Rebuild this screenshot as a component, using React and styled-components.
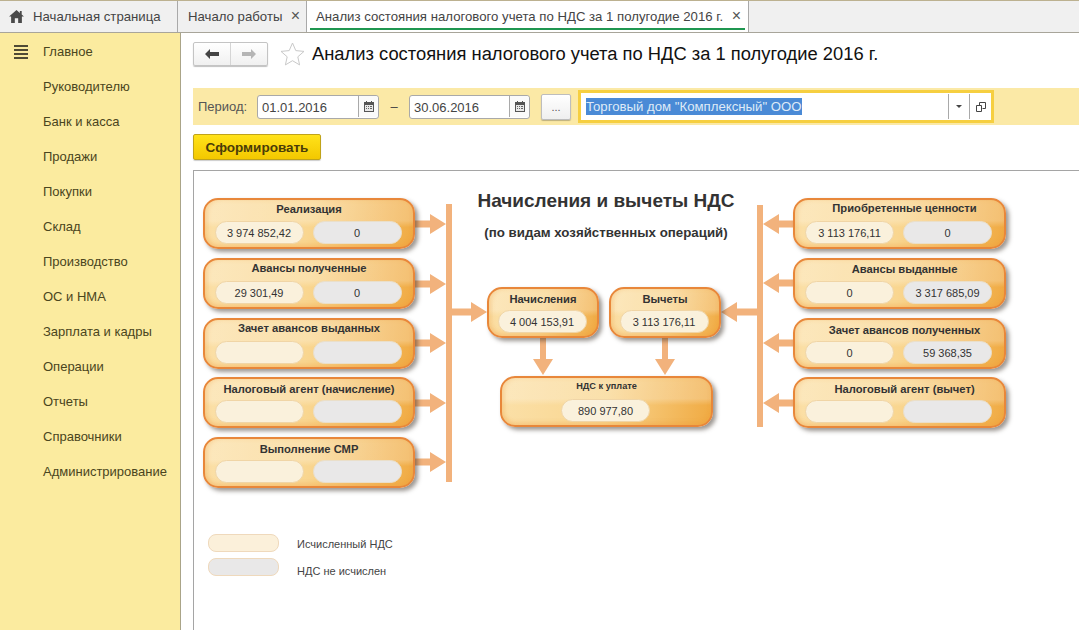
import React from "react";
import styled, { createGlobalStyle } from "styled-components";

const Global = createGlobalStyle`
  html, body { margin: 0; padding: 0; height: 100%; background: #fff; overflow: hidden; }
  #root { height: 100%; }
  * { box-sizing: border-box; }
`;
const Page = styled.div`
  width: 1079px; height: 630px; display: flex; flex-direction: column; overflow: hidden;
  font-family: "Liberation Sans", Arial, sans-serif; color: #333;
`;
const TabBar = styled.div`
  height: 33px; flex: none; display: flex; background: #f0f0f0;
  border-top: 1px solid #bcb190; border-bottom: 1px solid #a8a59a;
`;
const Tab = styled.div`
  position: relative; display: flex; align-items: center; flex: none;
  width: ${p => p.$w}px; padding-left: ${p => p.$pad}px; gap: ${p => p.$gap || 0}px;
  border-right: 1px solid #a9a9a9; font-size: 13.2px; color: #444; white-space: nowrap;
  background: ${p => (p.$active ? "#fff" : "#f0f0f0")};
  ${p => p.$active && "&::after { content: ''; position: absolute; left: 3px; right: 3px; bottom: 2px; height: 2px; background: #1f9650; }"}
`;
const Close = styled.span`
  position: absolute; right: ${p => p.$r}px; top: 8px; font-size: 16px; line-height: 14px; color: #555;
`;
const Body = styled.div`flex: 1; display: flex; min-height: 0;`;
const Sidebar = styled.nav`
  width: 181px; flex: none; background: #fbeb9f; border-right: 1px solid #aaa488;
  padding-top: 1px; display: flex; flex-direction: column;
`;
const NavItem = styled.div`
  position: relative; height: 35px; padding-left: 43px; display: flex; align-items: center;
  font-size: 13px; color: #4a4520; white-space: nowrap;
`;
const BurgerIcon = styled.svg`position: absolute; left: 14px; top: 11px;`;
const Main = styled.main`
  flex: 1; min-width: 0; display: flex; flex-direction: column; padding: 9px 0 0 12px;
`;
const Header = styled.div`height: 24px; display: flex; align-items: center; margin-bottom: 22px;`;
const NavGroup = styled.div`
  width: 75px; height: 24px; display: flex; border: 1px solid #c4c4c4; border-radius: 2px;
  background: linear-gradient(#fff, #f0f0f0); box-shadow: 0 1px 1px rgba(0,0,0,.25);
`;
const NavBtn = styled.div`
  flex: 1; display: flex; align-items: center; justify-content: center;
  & + & { border-left: 1px solid #d5d5d5; }
`;
const Title = styled.h1`
  margin: 0 0 0 7px; font-size: 18.35px; font-weight: 400; color: #111; white-space: nowrap;
`;
const StarIcon = styled.svg`margin-left: 12px; flex: none;`;
const FilterBar = styled.div`
  height: 37px; display: flex; align-items: center; background: #fbe9a6; padding-left: 5px; margin-bottom: 9px;
`;
const Label = styled.span`font-size: 13px; color: #555; width: 59px; flex: none;`;
const DateBox = styled.div`
  width: ${p => p.$w}px; height: 24px; flex: none; display: flex; align-items: center;
  background: #fff; border: 1px solid #a9a9a9; border-radius: 3px;
  font-size: 13px; color: #444; padding: 1px 0 0 4px;
`;
const DateText = styled.span`flex: 1;`;
const CalBtn = styled.span`
  width: 20px; height: 100%; margin-top: -1px; display: flex; align-items: center; justify-content: center;
  border-left: 1px solid #a9a9a9; background: #fafafa; border-radius: 0 3px 3px 0;
`;
const Dash = styled.span`width: 30px; flex: none; text-align: center; font-size: 13px; color: #444;`;
const DotsBtn = styled.div`
  width: 30px; height: 26px; margin-left: 11px; flex: none; display: flex; align-items: center; justify-content: center;
  border: 1px solid #bdbdbd; border-radius: 2px; background: linear-gradient(#fff, #efefef);
  box-shadow: 0 1px 1px rgba(0,0,0,.25); font-size: 11px; color: #555;
`;
const Combo = styled.div`
  width: 416px; height: 33px; margin-left: 7px; flex: none; display: flex; align-items: center;
  background: #fff; border: 3px solid #f6cf40; padding-left: 5px;
  font-size: 13.2px;
`;
const ComboValue = styled.span`flex: 1; min-width: 0;`;
const Selected = styled.span`background: #4a8ad6; color: #dfeaf7; padding: 1px 0;`;
const ComboBtn = styled.span`
  width: ${p => p.$w}px; height: 25px; flex: none; display: flex; align-items: center; justify-content: center;
  border-left: 1px solid #a9a9a9;
`;
const Submit = styled.div`
  width: 128px; height: 26px; flex: none; display: flex; align-items: center; justify-content: center;
  background: linear-gradient(#ffe21a, #f3c800); border: 1px solid #c0a31a; border-radius: 2px;
  box-shadow: 0 1px 1px rgba(0,0,0,.2); font-size: 13.5px; font-weight: 700; color: #4a3c08; margin-bottom: 10px;
`;
const Frame = styled.section`
  position: relative; flex: 1; border: 1px solid #a5a5a5; border-width: 1px 0 0 1px; overflow: hidden; background: #fff;
`;
/* Diagram canvas: card coordinates are page coordinates, the frame starts at (194,171) */
const Canvas = styled.div`position: absolute; left: -194px; top: -171px; width: 1079px; height: 630px;`;
const Wires = styled.svg`position: absolute; left: 0; top: 0;`;
const Card = styled.div`
  position: absolute; left: ${p => p.$x}px; top: ${p => p.$y}px; width: ${p => p.$w}px; height: 51px;
  border: 2px solid #e8873a; border-radius: 15px;
  background:
    linear-gradient(rgba(255,255,255,.24) 0 44%, rgba(255,255,255,0) 58%),
    linear-gradient(100deg, #fbe0a8 0%, #f9d690 50%, #f0aa42 100%);
  box-shadow: 3px 3px 4px rgba(60,50,40,.5), inset 0 -3px 4px rgba(240,150,50,.22), inset 3px 0 4px rgba(240,160,60,.2);
`;
const CardTitle = styled.div`
  margin-top: ${p => p.$top}px; margin-bottom: ${p => 2 - p.$top + 2}px; padding-left: ${p => p.$shift || 0}px;
  height: 17px; line-height: 17px; text-align: center; white-space: nowrap;
  font-size: ${p => p.$small ? 9.2 : 11.2}px; font-weight: 700; color: #333;
`;
const Pills = styled.div`display: flex; justify-content: center; gap: 9px; padding-right: 2px;`;
const Pill = styled.div`
  width: 89px; height: 23px; flex: none; border-radius: 12px; display: flex; align-items: center; justify-content: center;
  font-size: 11px; color: #333; white-space: nowrap;
  background: ${p => (p.$gray ? "#e9e8e8" : "#faf1dc")};
  border: 1px solid ${p => (p.$gray ? "#eadfca" : "#f0d5a6")};
`;
const Heading = styled.div`
  position: absolute; left: 406px; width: 400px; top: ${p => p.$y}px; text-align: center; white-space: nowrap;
  font-size: ${p => p.$s}px; font-weight: 700; color: #333;
`;
const Legend = styled.div`
  position: absolute; left: 208px; top: 534px; display: grid; grid-template-columns: 71px auto; column-gap: 18px; row-gap: 6px;
  font-size: 11px; color: #444; align-items: start;
`;
const Swatch = styled.span`
  height: 18px; border-radius: 8px; display: block;
  border: 1px solid #efd9bc; background: ${p => (p.$gray ? "#e9e8e8" : "#fbf0da")};
`;
const LegendText = styled.span`line-height: 13px; padding-top: ${p => p.$pt}px; white-space: nowrap;`;

const H = ({ x1, x2, y }) => {
  const dir = x2 > x1 ? 1 : -1;
  const head = x2 - dir * 16;
  return <path d={`M${x1} ${y - 3.5}H${head}V${y - 10}L${x2} ${y}L${head} ${y + 10}V${y + 3.5}H${x1}Z`} />;
};
const V = ({ x, y1, y2 }) => (
  <path d={`M${x - 3} ${y1}V${y2 - 16}H${x - 10}L${x} ${y2}L${x + 10} ${y2 - 16}H${x + 3}V${y1}Z`} />
);

const nav = ["Главное","Руководителю","Банк и касса","Продажи","Покупки","Склад","Производство","ОС и НМА","Зарплата и кадры","Операции","Отчеты","Справочники","Администрирование"];
const cards = [
  { x: 203, w: 212, y: 198, top: 1, t: "Реализация", a: "3 974 852,42", b: "0" },
  { x: 203, w: 212, y: 258, top: 0, t: "Авансы полученные", a: "29 301,49", b: "0" },
  { x: 203, w: 212, y: 318, top: 0, t: "Зачет авансов выданных" },
  { x: 203, w: 212, y: 377, top: 2, t: "Налоговый агент (начисление)" },
  { x: 203, w: 212, y: 437, top: 2, t: "Выполнение СМР" },
  { x: 793, w: 213, y: 198, top: 0, shift: 10, t: "Приобретенные ценности", a: "3 113 176,11", b: "0" },
  { x: 793, w: 213, y: 258, top: 1, shift: 10, t: "Авансы выданные", a: "0", b: "3 317 685,09" },
  { x: 793, w: 213, y: 318, top: 2, shift: 10, t: "Зачет авансов полученных", a: "0", b: "59 368,35" },
  { x: 793, w: 213, y: 377, top: 2, shift: 10, t: "Налоговый агент (вычет)" },
];
const Cal = () => (
  <svg width="10" height="11" viewBox="0 0 10 11"><path fill="#555" d="M0 1h2V0h1v1h4V0h1v1h2v10H0z"/><path fill="#e8e8e8" d="M1 4h8v6H1z"/><path fill="#666" d="M2 5h1v1H2zM4 5h1v1H4zM6 5h2v1H6zM2 7h1v1H2zM4 7h1v1H4zM6 7h2v1H6z"/></svg>
);

export default function App() {
  return (
    <Page>
      <Global />
      <TabBar>
        <Tab $w={178} $pad={9} $gap={9}>
          <svg width="15" height="13" viewBox="0 0 16 14"><path fill="#4a4a4a" d="M8 0L0 7h2.2v7h4V9h3.6v5h4V7H16l-2.4-2.1V1h-2v2.1z"/></svg>
          Начальная страница
        </Tab>
        <Tab $w={129} $pad={10}>Начало работы<Close $r={6}>×</Close></Tab>
        <Tab $w={442} $pad={9} $active>Анализ состояния налогового учета по НДС за 1 полугодие 2016 г.<Close $r={7}>×</Close></Tab>
      </TabBar>
      <Body>
        <Sidebar>
          {nav.map((n, i) => (
            <NavItem key={n}>
              {i === 0 && (
                <BurgerIcon width="14" height="14" viewBox="0 0 14 14">
                  <path fill="#4f4a35" d="M0 0h14v2H0zM0 4h14v2H0zM0 8h14v2H0zM0 12h14v2H0z" />
                </BurgerIcon>
              )}
              {n}
            </NavItem>
          ))}
        </Sidebar>
        <Main>
          <Header>
            <NavGroup>
              <NavBtn><svg width="14" height="10" viewBox="0 0 14 10"><path fill="#444" d="M0 5l5-5v3h9v4H5v3z"/></svg></NavBtn>
              <NavBtn><svg width="14" height="10" viewBox="0 0 14 10"><path fill="#b5b5b5" d="M14 5L9 0v3H0v4h9v3z"/></svg></NavBtn>
            </NavGroup>
            <StarIcon width="25" height="24" viewBox="0 0 25 24"><path fill="#fff" stroke="#c9c9c9" d="M12.5 1l3.3 7.6 8.2.8-6.2 5.4 1.8 8.1-7.1-4.2-7.1 4.2 1.8-8.1L1 9.4l8.2-.8z"/></StarIcon>
            <Title>Анализ состояния налогового учета по НДС за 1 полугодие 2016 г.</Title>
          </Header>
          <FilterBar>
            <Label>Период:</Label>
            <DateBox $w={122}><DateText>01.01.2016</DateText><CalBtn><Cal /></CalBtn></DateBox>
            <Dash>–</Dash>
            <DateBox $w={121}><DateText>30.06.2016</DateText><CalBtn><Cal /></CalBtn></DateBox>
            <DotsBtn>...</DotsBtn>
            <Combo>
              <ComboValue><Selected>Торговый дом "Комплексный" ООО</Selected></ComboValue>
              <ComboBtn $w={21}><svg width="6" height="3" viewBox="0 0 6 3"><path fill="#444" d="M0 0h6L3 3z"/></svg></ComboBtn>
              <ComboBtn $w={22}><svg width="10" height="10" viewBox="0 0 10 10"><path fill="none" stroke="#444" d="M3.5 3V.5h6v6H6.5M.5 3.5h5v6h-5z"/></svg></ComboBtn>
            </Combo>
          </FilterBar>
          <Submit>Сформировать</Submit>
          <Frame>
            <Canvas>
              <Wires width="1079" height="630" fill="#f2b27c">
                <rect x="446" y="204" width="6" height="278" />
                <rect x="757" y="205" width="6" height="222" />
                {[224, 284, 343, 403, 462].map(y => <H key={y} x1={415} x2={446} y={y} />)}
                {[224, 283, 343, 403].map(y => <H key={y} x1={793} x2={763} y={y} />)}
                <H x1={452} x2={487} y={312} />
                <H x1={757} x2={721} y={312} />
                <V x={543} y1={337} y2={375} />
                <V x={665} y1={337} y2={375} />
              </Wires>
              <Heading $y={190} $s={19}>Начисления и вычеты НДС</Heading>
              <Heading $y={225} $s={13.3}>(по видам хозяйственных операций)</Heading>
              {cards.map(c => (
                <Card key={c.t} $x={c.x} $y={c.y} $w={c.w}>
                  <CardTitle $top={c.top} $shift={c.shift}>{c.t}</CardTitle>
                  <Pills><Pill>{c.a}</Pill><Pill $gray>{c.b}</Pill></Pills>
                </Card>
              ))}
              <Card $x={487} $y={287} $w={112}>
                <CardTitle $top={2}>Начисления</CardTitle>
                <Pills><Pill>4 004 153,91</Pill></Pills>
              </Card>
              <Card $x={609} $y={287} $w={112}>
                <CardTitle $top={2}>Вычеты</CardTitle>
                <Pills><Pill>3 113 176,11</Pill></Pills>
              </Card>
              <Card $x={500} $y={376} $w={213}>
                <CardTitle $small $top={0}>НДС к уплате</CardTitle>
                <Pills><Pill>890 977,80</Pill></Pills>
              </Card>
              <Legend>
                <Swatch />
                <LegendText $pt={4}>Исчисленный НДС</LegendText>
                <Swatch $gray />
                <LegendText $pt={7}>НДС не исчислен</LegendText>
              </Legend>
            </Canvas>
          </Frame>
        </Main>
      </Body>
    </Page>
  );
}
